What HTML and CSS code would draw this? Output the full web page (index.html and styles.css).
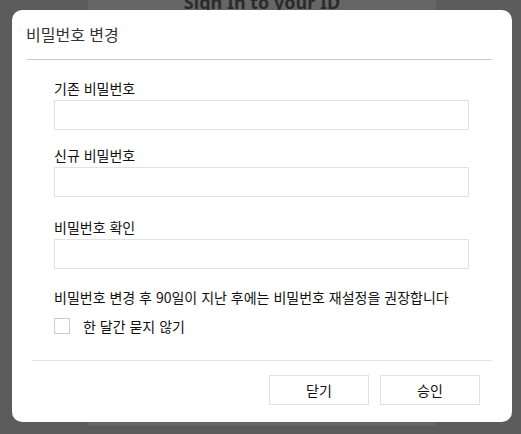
FILE: index.html
```html
<!DOCTYPE html>
<html lang="ko">
<head>
  <meta charset="UTF-8">
  <title>비밀번호 변경</title>
  <meta name="viewport" content="width=device-width, initial-scale=1.0">
  <link rel="stylesheet" href="styles.css">
</head>
<body>
  <div class="page">
    <h1 class="page-title">Sign In to your ID</h1>
  </div>

  <div class="modal">
    <div class="modal-header">
      <h2>비밀번호 변경</h2>
    </div>

    <div class="modal-body">
      <div class="field">
        <label for="oldPw">기존 비밀번호</label>
        <input type="password" id="oldPw" />
      </div>
      <div class="field">
        <label for="newPw">신규 비밀번호</label>
        <input type="password" id="newPw" />
      </div>
      <div class="field field-confirm">
        <label for="confirmPw">비밀번호 확인</label>
        <input type="password" id="confirmPw" />
      </div>

      <p class="notice">비밀번호 변경 후 90일이 지난 후에는 비밀번호 재설정을 권장합니다</p>

      <label class="check-row">
        <span class="check-box"></span>
        <span>한 달간 묻지 않기</span>
      </label>
    </div>

    <div class="modal-footer">
      <button type="button">닫기</button>
      <button type="button">승인</button>
    </div>
  </div>
</body>
</html>
```

FILE: styles.css
```css
body {
  margin: 0;
  height: 434px;
  overflow: hidden;
  background: #5c5c5c;
  font-family: "Noto Sans CJK KR", "Noto Sans", sans-serif;
  color: #111;
}
.page {
  margin: 0 85px 0 88px;
  height: 100%;
  background: #666666;
}
.page-title {
  margin: 0;
  padding-top: 0;
  text-align: center;
  font-family: "Noto Sans", sans-serif;
  font-size: 18px;
  font-weight: bold;
  line-height: 20px;
  margin-top: -8px;
  color: #2b2b2b;
}
.modal {
  position: absolute;
  left: 12px;
  top: 10px;
  width: 500px;
  height: 412px;
  background: #ffffff;
  border-radius: 10px;
  box-sizing: border-box;
}
.modal-header {
  margin: 0 20px 0 14px;
  height: 49px;
  border-bottom: 1px solid #cccccc;
}
.modal-header h2 {
  margin: 0;
  font-size: 16px;
  font-weight: normal;
  line-height: 49px;
  color: #333333;
}
.modal-body {
  margin: 0 20px;
  padding: 19px 23px 25px 22px;
  border-bottom: 1px solid #e2e2e2;
}
.field label {
  display: block;
  font-size: 14px;
  line-height: 18px;
  margin-bottom: 3px;
}
.field input {
  display: block;
  width: 100%;
  height: 30px;
  box-sizing: border-box;
  border: 1px solid #e2e2e2;
  border-radius: 0;
  outline: none;
}
.field + .field {
  margin-top: 16px;
}
.field.field-confirm {
  margin-top: 21px;
}
.notice {
  margin: 19px 0 0;
  font-size: 14px;
  line-height: 18px;
  white-space: nowrap;
}
.check-row {
  display: flex;
  align-items: center;
  gap: 13px;
  margin-top: 11px;
  font-size: 14px;
  line-height: 18px;
}
.check-box {
  width: 16px;
  height: 16px;
  box-sizing: border-box;
  border: 1px solid #cccccc;
}
.modal-footer {
  display: flex;
  justify-content: flex-end;
  gap: 11px;
  padding: 14px 32px 0 0;
}
.modal-footer button {
  width: 100px;
  height: 30px;
  background: #ffffff;
  border: 1px solid #e2e2e2;
  font-family: "Noto Sans CJK KR", sans-serif;
  font-size: 14px;
  color: #111;
  cursor: pointer;
}
```
